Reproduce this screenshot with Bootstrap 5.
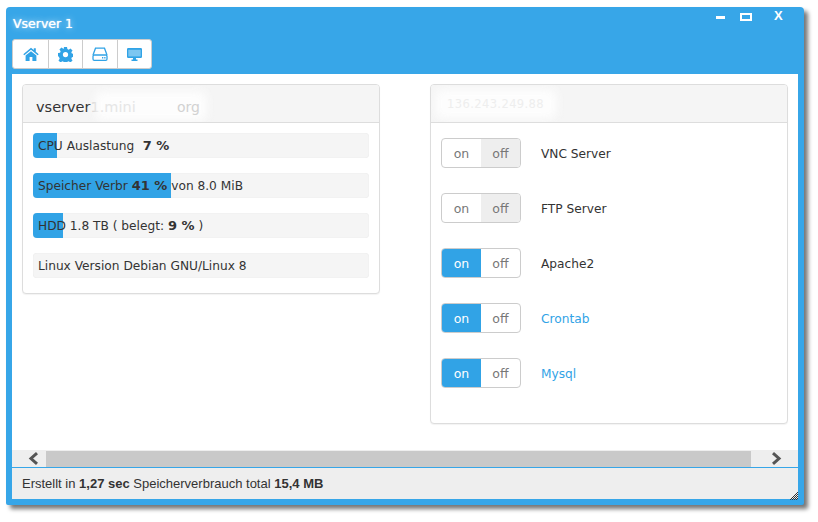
<!DOCTYPE html>
<html lang="de"><head><meta charset="utf-8"><title>Vserver 1</title>
<link href="https://cdn.jsdelivr.net/npm/bootstrap@5.3.0/dist/css/bootstrap.min.css" rel="stylesheet">
<style>
html,body{height:100%;background:#fff;overflow:hidden}
body{padding:7px 14px 17px 6px;font-family:"DejaVu Sans",sans-serif;font-size:12.2px;color:#333}
b{font-size:13px}
.win{height:498px;width:798px;background:#37a6e8;border-radius:4px 4px 2px 2px;box-shadow:4px 4px 4px 0 #777;padding:0 6px 6px;position:relative}
.win-title{height:32px;color:#fff;font:12.5px/33px "DejaVu Sans",sans-serif;position:relative}
.win-title span{display:inline-block;padding-left:1px;text-shadow:0 0 1px #fff,0 0 6px #d5ecfb}
.win-ctl{position:absolute;top:0;right:0;left:0;height:32px}
.ctl-min{position:absolute;left:704px;top:9px;width:9px;height:3px;background:#fff}
.ctl-max{position:absolute;left:728px;top:6px;width:12px;height:8px;border:2px solid #fff}
.ctl-x{position:absolute;left:762px;top:0;color:#fff;font:bold 13px/18px "Liberation Sans",sans-serif}
.tool{height:35px}
.tool-group{display:inline-flex;background:#fff;border:1px solid #ccc;border-radius:3px;height:30px}
.tool-btn{height:28px;width:34px;display:flex;align-items:center;justify-content:center;border-right:1px solid #ccc}
.tool-btn:last-child{border-right:0;width:33px}
.tool-wide{width:36px}
.tool-mid{width:35px}
.client{height:376px;background:#fff;padding:10px 10px 0;display:flex;justify-content:space-between}
.pane{border:1px solid #ddd;border-radius:4px;background:#fff;box-shadow:0 1px 1px rgba(0,0,0,.05)}
.pane-l{width:358px;height:210px}
.pane-r{width:358px;height:340px}
.pane-head{height:38px;background:#f5f5f5;border-bottom:1px solid #ddd;border-radius:3px 3px 0 0;padding-left:13px;font-size:14.5px;line-height:44px;color:#333;position:relative;overflow:hidden;white-space:nowrap}
.smudge{position:absolute;background:#fdfdfd;filter:blur(5px);border-radius:8px}
.smudge-host{left:72px;top:6px;width:112px;height:30px}
.smudge-ip{left:4px;top:4px;width:122px;height:30px}
.fade-a{color:#c8c8c8}
.fade-b{color:#e6e6e6;position:relative}
.fade-c{position:absolute;left:154px;color:#d2d2d2;font-size:14px}
.ghost{position:relative;color:#eee;font-size:11.5px;letter-spacing:.4px;line-height:38px;padding-left:3px}
.meter{height:25px;background:#f5f5f5;border-radius:4px;position:relative;margin:0 10px 15px;overflow:hidden;box-shadow:inset 0 0 1px rgba(0,0,0,.12);line-height:25px;white-space:nowrap;padding-left:5px}
.meter-plain{padding-top:1px}
.meter-fill{position:absolute;left:0;top:0;bottom:0;background:#31a3e6}
.meter-txt{position:relative}
.meters{padding-top:10px}
.rows{padding-top:15px}
.sw-row{display:flex;align-items:center;height:30px;margin:0 10px 25px}
.sw-row span{padding-top:2px}
.sw{display:flex;width:80px;height:30px;border:1px solid #ccc;border-radius:4px;overflow:hidden;color:#777;font-size:12.5px;line-height:30px;text-align:center;margin-right:20px}
.sw i{font-style:normal;width:39px;display:block}
.is-off i+i{background:#eee}
.is-on i:first-child{background:#31a3e6;color:#fff;font-weight:500}
.svc-link{color:#31a3e6;font-weight:500}
.scroll{height:17px;background:#eee;display:flex;align-items:flex-start}
.scroll-btn{width:34px;height:17px;display:flex;align-items:center;justify-content:center;padding-left:9px}
.scroll-end{width:47px;padding-left:4px}
.scroll-track{width:705px;height:16px;background:#c9c9c9;margin-top:1px}
.status{height:32px;background:#eee;border-top:1px solid #37a6e8;font:13px/31px "Liberation Sans",sans-serif;color:#333;padding-left:10px;position:relative}
.status b{font-size:13px}
.grip{position:absolute;right:0;bottom:-1px;width:8px;height:8px}
</style></head><body>
<div class="win">
  <div class="win-title"><span>Vserver 1</span>
    <div class="win-ctl"><div class="ctl-min"></div><div class="ctl-max"></div><div class="ctl-x">X</div></div>
  </div>
  <div class="tool">
    <div class="tool-group">
      <div class="tool-btn tool-wide"><svg width="16" height="14" viewBox="0 0 16 14"><path fill="#31a3e6" d="M8 0.800 0.300 7.200l1 1.100L8 2.800l6.700 5.500 1-1.100L12.800 4.800V1.200h-2v1.900zM2.600 8.600V14h4V10h2.800v4h4V8.600L8 4.200z"/></svg></div>
      <div class="tool-btn"><svg width="15" height="15" viewBox="0 0 16 16"><path fill="#31a3e6" fill-rule="evenodd" d="M6.400 0h3.200l.4 2.200 1.400.6 1.900-1.300 2.200 2.200-1.300 1.900.6 1.400 2.200.4v3.200l-2.200.4-.6 1.400 1.300 1.900-2.200 2.200-1.900-1.300-1.400.6-.4 2.200H6.400l-.4-2.200-1.400-.6-1.900 1.300-2.200-2.200 1.300-1.900-.6-1.400L0 9.600V6.400l2.200-.4.6-1.400L1.500 2.700 3.700.5l1.900 1.300L6 2.200zM8 5.200a2.800 2.800 0 1 0 0 5.600 2.800 2.800 0 1 0 0-5.600z"/></svg></div>
      <div class="tool-btn tool-mid"><svg width="16" height="14" viewBox="0 0 16 14"><path fill="none" stroke="#31a3e6" stroke-width="1.300" d="M1 8 3.500 1.200h9L15 8"/><rect x="1" y="8" width="14" height="5.300" rx="1.200" fill="#fff" stroke="#31a3e6" stroke-width="1.300"/><path fill="#31a3e6" d="M10 10h1.300v1.500H10zM12.200 10h1.300v1.500h-1.300z"/></svg></div>
      <div class="tool-btn"><svg width="15" height="13" viewBox="0 0 15 13"><path fill="#31a3e6" d="M1.200 0h12.600A1.200 1.200 0 0 1 15 1.200v7.600a1.200 1.200 0 0 1-1.200 1.200H9v1.500h1.500V13h-6v-1.500H6V10H1.200A1.200 1.200 0 0 1 0 8.800V1.200A1.200 1.200 0 0 1 1.200 0z"/><path fill="#7cc6f1" d="M1.300 1.800h12.400v6.600H1.300z"/></svg></div>
    </div>
  </div>
  <div class="client">
    <div class="pane pane-l">
      <div class="pane-head">vserver<span class="fade-a">1</span><span class="smudge smudge-host"></span><span class="fade-b">.mini</span><span class="fade-c">org</span></div>
      <div class="meters">
        <div class="meter"><div class="meter-fill" style="width:7%"></div><span class="meter-txt">CPU Auslastung <b>&nbsp;7 %</b></span></div>
        <div class="meter"><div class="meter-fill" style="width:41%"></div><span class="meter-txt">Speicher Verbr <b>41 %</b> von 8.0 MiB</span></div>
        <div class="meter"><div class="meter-fill" style="width:9%"></div><span class="meter-txt">HDD 1.8 TB ( belegt: <b>9 %</b> )</span></div>
        <div class="meter meter-plain"><span class="meter-txt">Linux Version Debian GNU/Linux 8</span></div>
      </div>
    </div>
    <div class="pane pane-r">
      <div class="pane-head"><span class="smudge smudge-ip"></span><div class="ghost">136.243.249.88</div></div>
      <div class="rows">
        <div class="sw-row"><div class="sw is-off"><i>on</i><i>off</i></div><span>VNC Server</span></div>
        <div class="sw-row"><div class="sw is-off"><i>on</i><i>off</i></div><span>FTP Server</span></div>
        <div class="sw-row"><div class="sw is-on"><i>on</i><i>off</i></div><span>Apache2</span></div>
        <div class="sw-row"><div class="sw is-on"><i>on</i><i>off</i></div><span class="svc-link">Crontab</span></div>
        <div class="sw-row"><div class="sw is-on"><i>on</i><i>off</i></div><span class="svc-link">Mysql</span></div>
      </div>
    </div>
  </div>
  <div class="scroll">
    <div class="scroll-btn"><svg width="11" height="13" viewBox="0 0 11 13"><path fill="none" stroke="#555" stroke-width="3" d="M9 1.200 3 6.500 9 11.800"/></svg></div>
    <div class="scroll-track"></div>
    <div class="scroll-btn scroll-end"><svg width="11" height="13" viewBox="0 0 11 13"><path fill="none" stroke="#555" stroke-width="3" d="M2 1.200 8 6.500 2 11.800"/></svg></div>
  </div>
  <div class="status">Erstellt in <b>1,27 sec</b> Speicherverbrauch total <b>15,4 MB</b>
    <svg class="grip" viewBox="0 0 8 8"><path fill="#333" d="M7 0h1v1H7zM6 1h1v1H6zM5 2h1v1H5zM7 2h1v1H7zM4 3h1v1H4zM6 3h1v1H6zM3 4h1v1H3zM5 4h1v1H5zM7 4h1v1H7zM2 5h1v1H2zM4 5h1v1H4zM6 5h1v1H6zM1 6h1v1H1zM3 6h1v1H3zM5 6h1v1H5zM7 6h1v1H7zM0 7h1v1H0zM2 7h1v1H2zM4 7h1v1H4zM6 7h1v1H6z"/></svg>
  </div>
</div>
</body></html>
